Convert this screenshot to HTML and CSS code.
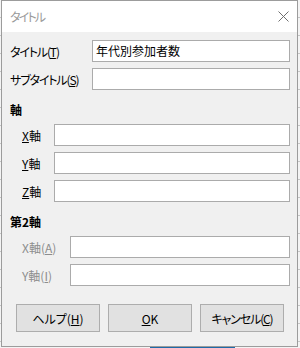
FILE: index.html
```html
<!DOCTYPE html>
<html lang="ja">
<head>
<meta charset="utf-8">
<title>タイトル</title>
<link rel="stylesheet" href="styles.css">
</head>
<body>
<div class="dialog">
  <div class="titlebar">
    <span class="title">タイトル</span>
    <svg class="close" width="11" height="11" viewBox="0 0 11 11"><path d="M0.5 0.5 L10.5 10.5 M10.5 0.5 L0.5 10.5" stroke="#6f6f6f" stroke-width="1" fill="none"/></svg>
  </div>
  <div class="content">
    <div class="grid g-main">
      <label class="lbl kn">タイトル(<u>T</u>)</label>
      <div class="field">年代別参加者数</div>
      <label class="lbl kn">サブタイトル(<u>S</u>)</label>
      <div class="field"></div>
    </div>
    <div class="heading">軸</div>
    <div class="grid g-axis">
      <label class="lbl"><u>X</u>軸</label>
      <div class="field"></div>
      <label class="lbl"><u>Y</u>軸</label>
      <div class="field"></div>
      <label class="lbl"><u>Z</u>軸</label>
      <div class="field"></div>
    </div>
    <div class="heading">第2軸</div>
    <div class="grid g-sec">
      <label class="lbl dis">X軸(<u>A</u>)</label>
      <div class="field"></div>
      <label class="lbl dis">Y軸(<u>I</u>)</label>
      <div class="field"></div>
    </div>
    <div class="buttons">
      <div class="btn">ヘルプ(<u>H</u>)</div>
      <div class="btn"><u>O</u>K</div>
      <div class="btn kn">キャンセル(<u>C</u>)</div>
    </div>
  </div>
</div>
<div class="sheetsel"></div>
</body>
</html>
```
FILE: styles.css
```css
html, body {
  margin: 0;
  padding: 0;
}
body {
  width: 300px;
  height: 348px;
  overflow: hidden;
  background-color: #f4f4f4;
  background-image: repeating-linear-gradient(to bottom, transparent 0, transparent 17px, #c6c6c6 17px, #c6c6c6 18px);
  font-family: "Noto Sans CJK JP", "Noto Sans", sans-serif;
  font-size: 12px;
  color: #000;
  font-feature-settings: "palt";
}
.dialog {
  margin-left: 1px;
  width: 297px;
  height: 347px;
  box-sizing: border-box;
  border: 1px solid #9c9c9c;
  background: #f0f0f0;
  display: flex;
  flex-direction: column;
}
.titlebar {
  height: 31px;
  flex: none;
  background: #fff;
  display: flex;
  align-items: center;
  padding: 0 8px 0 8px;
  justify-content: space-between;
}
.title {
  color: #9a9a9a;
  font-size: 12px;
  line-height: 16px;
  margin-top: 1px;
  letter-spacing: -1.8px;
}
.close {
  display: block;
}
.content {
  padding: 8px 7px 0 8px;
}
.grid {
  display: grid;
  row-gap: 6px;
  align-items: center;
}
.g-main { grid-template-columns: 82px 198px; }
.g-axis { grid-template-columns: 32px 236px; padding-left: 12px; }
.g-sec { grid-template-columns: 48px 220px; padding-left: 12px; }
.lbl {
  line-height: 16px;
  white-space: nowrap;
  margin-top: 2px;
}
.kn { letter-spacing: -1.15px; }
.lbl.dis { color: #8d8d8d; }
.field {
  height: 22px;
  box-sizing: border-box;
  border: 1px solid #ababab;
  background: #fff;
  padding: 0 3px;
  line-height: 20px;
  font-size: 12px;
}
.heading {
  margin: 10px 0 4px 0;
  line-height: 20px;
  height: 20px;
  font-weight: bold;
}
.buttons {
  display: flex;
  gap: 8px;
  padding-left: 6px;
  margin-top: 18px;
}
.btn {
  width: 84px;
  height: 28px;
  box-sizing: border-box;
  border: 1px solid #adadad;
  background: #e1e1e1;
  display: flex;
  align-items: center;
  justify-content: center;
  line-height: 16px;
  padding-top: 1px;
}
.sheetsel {
  margin-left: 150px;
  width: 85px;
  height: 1px;
  background: #1e6aa8;
}
```
